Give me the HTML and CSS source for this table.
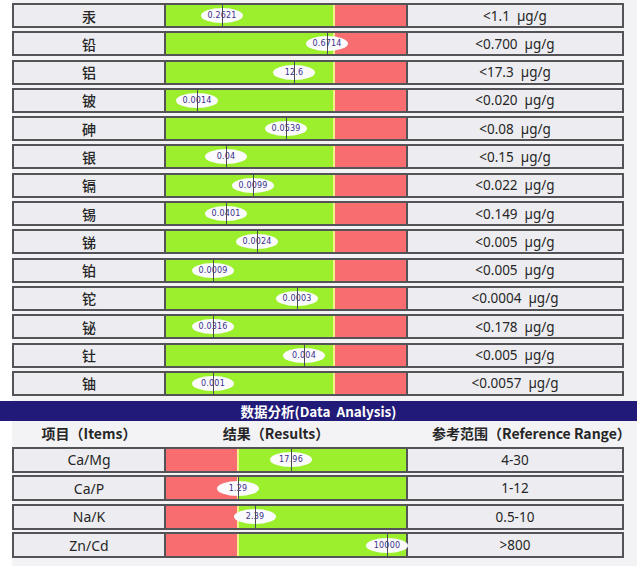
FILE: index.html
```html
<!DOCTYPE html>
<html lang="zh">
<head>
<meta charset="utf-8">
<link rel="stylesheet" href="styles.css">
</head>
<body>
<div class="page">
  <div class="rows rows-top">
    <div class="row"><div class="label">汞</div><div class="bar bar-gr"><div class="seg green"></div><div class="seg line"></div><div class="seg red"></div><div class="marker" style="left:56px"><span>0.2621</span></div></div><div class="value">&lt;1.1&nbsp;&nbsp;µg/g</div></div>
    <div class="row"><div class="label">铅</div><div class="bar bar-gr"><div class="seg green"></div><div class="seg line"></div><div class="seg red"></div><div class="marker" style="left:161px"><span>0.6714</span></div></div><div class="value">&lt;0.700&nbsp;&nbsp;µg/g</div></div>
    <div class="row"><div class="label">铝</div><div class="bar bar-gr"><div class="seg green"></div><div class="seg line"></div><div class="seg red"></div><div class="marker" style="left:128px"><span>12.6</span></div></div><div class="value">&lt;17.3&nbsp;&nbsp;µg/g</div></div>
    <div class="row"><div class="label">铍</div><div class="bar bar-gr"><div class="seg green"></div><div class="seg line"></div><div class="seg red"></div><div class="marker" style="left:31px"><span>0.0014</span></div></div><div class="value">&lt;0.020&nbsp;&nbsp;µg/g</div></div>
    <div class="row"><div class="label">砷</div><div class="bar bar-gr"><div class="seg green"></div><div class="seg line"></div><div class="seg red"></div><div class="marker" style="left:120px"><span>0.0539</span></div></div><div class="value">&lt;0.08&nbsp;&nbsp;µg/g</div></div>
    <div class="row"><div class="label">银</div><div class="bar bar-gr"><div class="seg green"></div><div class="seg line"></div><div class="seg red"></div><div class="marker" style="left:60px"><span>0.04</span></div></div><div class="value">&lt;0.15&nbsp;&nbsp;µg/g</div></div>
    <div class="row"><div class="label">镉</div><div class="bar bar-gr"><div class="seg green"></div><div class="seg line"></div><div class="seg red"></div><div class="marker" style="left:87px"><span>0.0099</span></div></div><div class="value">&lt;0.022&nbsp;&nbsp;µg/g</div></div>
    <div class="row"><div class="label">锡</div><div class="bar bar-gr"><div class="seg green"></div><div class="seg line"></div><div class="seg red"></div><div class="marker" style="left:60px"><span>0.0401</span></div></div><div class="value">&lt;0.149&nbsp;&nbsp;µg/g</div></div>
    <div class="row"><div class="label">锑</div><div class="bar bar-gr"><div class="seg green"></div><div class="seg line"></div><div class="seg red"></div><div class="marker" style="left:91px"><span>0.0024</span></div></div><div class="value">&lt;0.005&nbsp;&nbsp;µg/g</div></div>
    <div class="row"><div class="label">铂</div><div class="bar bar-gr"><div class="seg green"></div><div class="seg line"></div><div class="seg red"></div><div class="marker" style="left:47px"><span>0.0009</span></div></div><div class="value">&lt;0.005&nbsp;&nbsp;µg/g</div></div>
    <div class="row"><div class="label">铊</div><div class="bar bar-gr"><div class="seg green"></div><div class="seg line"></div><div class="seg red"></div><div class="marker" style="left:131px"><span>0.0003</span></div></div><div class="value">&lt;0.0004&nbsp;&nbsp;µg/g</div></div>
    <div class="row"><div class="label">铋</div><div class="bar bar-gr"><div class="seg green"></div><div class="seg line"></div><div class="seg red"></div><div class="marker" style="left:47px"><span>0.0316</span></div></div><div class="value">&lt;0.178&nbsp;&nbsp;µg/g</div></div>
    <div class="row"><div class="label">钍</div><div class="bar bar-gr"><div class="seg green"></div><div class="seg line"></div><div class="seg red"></div><div class="marker" style="left:138px"><span>0.004</span></div></div><div class="value">&lt;0.005&nbsp;&nbsp;µg/g</div></div>
    <div class="row"><div class="label">铀</div><div class="bar bar-gr"><div class="seg green"></div><div class="seg line"></div><div class="seg red"></div><div class="marker" style="left:47px"><span>0.001</span></div></div><div class="value">&lt;0.0057&nbsp;&nbsp;µg/g</div></div>
  </div>

  <div class="band">数据分析(Data&nbsp;&nbsp;Analysis)</div>

  <div class="head">
    <div class="h1">项目（Items）</div>
    <div class="h2">结果（Results）</div>
    <div class="h3">参考范围（Reference Range）</div>
  </div>

  <div class="rows rows-bottom">
    <div class="row row-b"><div class="label lat">Ca/Mg</div><div class="bar bar-rg"><div class="seg red"></div><div class="seg line"></div><div class="seg green"></div><div class="marker" style="left:125px"><span>17.96</span></div></div><div class="value">4-30</div></div>
    <div class="row row-b"><div class="label lat">Ca/P</div><div class="bar bar-rg"><div class="seg red"></div><div class="seg line"></div><div class="seg green"></div><div class="marker" style="left:72px"><span>1.29</span></div></div><div class="value">1-12</div></div>
    <div class="row row-b"><div class="label lat">Na/K</div><div class="bar bar-rg"><div class="seg red"></div><div class="seg line"></div><div class="seg green"></div><div class="marker" style="left:89px"><span>2.39</span></div></div><div class="value">0.5-10</div></div>
    <div class="row row-b"><div class="label lat">Zn/Cd</div><div class="bar bar-rg"><div class="seg red"></div><div class="seg line"></div><div class="seg green"></div><div class="marker" style="left:221px"><span>10000</span></div></div><div class="value">&gt;800</div></div>
  </div>
</div>
</body>
</html>
```

FILE: styles.css
```css
html, body {
  margin: 0;
  padding: 0;
  background: #ffffff;
}

.page {
  width: 640px;
  height: 566px;
  overflow: hidden;
  font-family: "Noto Sans", "Noto Sans CJK SC", sans-serif;
  color: #222;
  background: linear-gradient(to right, #ffffff 0, #ffffff 12px, #f3f3f6 12px, #f3f3f6 637px, #ffffff 637px);
}

.rows {
  display: flex;
  flex-direction: column;
  padding-left: 12px;
  width: 612px;
}

.rows-top {
  padding-top: 3px;
  gap: 3.3px;
}

.rows-bottom {
  padding-top: 2px;
  gap: 2.4px;
}

.row {
  display: grid;
  grid-template-columns: 152px 240px 1fr;
  height: 25px;
  box-sizing: border-box;
  border: 2px solid #545458;
  background: #ededf1;
}

.row-b {
  height: 26px;
}

.label {
  display: flex;
  align-items: center;
  justify-content: center;
  border-right: 2px solid #545458;
  font-family: "Noto Sans CJK SC", sans-serif;
  font-size: 14px;
  font-weight: 500;
  color: #262626;
}

.label.lat {
  font-family: "Noto Sans", sans-serif;
  font-size: 14px;
  font-weight: 400;
}

.value {
  display: flex;
  align-items: center;
  justify-content: center;
  border-left: 2px solid #545458;
  font-size: 13.5px;
  color: #262626;
}

.bar {
  position: relative;
  display: flex;
}

.seg.green {
  background: #9bef2c;
}

.seg.red {
  background: #f86e70;
}

.seg.line {
  width: 2px;
  background: #f1f08a;
}

.bar-gr .green {
  width: 167px;
}

.bar-gr .red {
  flex: 1;
}

.bar-rg .red {
  width: 71px;
}

.bar-rg .green {
  flex: 1;
}

.marker {
  position: absolute;
  top: 50%;
  width: 42px;
  height: 15px;
  margin-left: -21px;
  margin-top: -7.5px;
  border-radius: 50%;
  background: #fbfbfd;
  display: flex;
  align-items: center;
  justify-content: center;
  font-family: "DejaVu Sans", sans-serif;
  font-size: 8px;
  color: #3a2f8a;
  letter-spacing: 0.2px;
}

.marker::after {
  content: "";
  position: absolute;
  left: 50%;
  top: -4px;
  width: 1px;
  height: 23px;
  background: #4a4a52;
}

.marker span {
  position: relative;
}

.band {
  margin-top: 5px;
  width: 637px;
  height: 20px;
  background: #211a78;
  color: #ffffff;
  font-family: "Noto Sans CJK SC", sans-serif;
  font-weight: 700;
  font-size: 13.5px;
  display: flex;
  align-items: center;
  justify-content: center;
}

.head {
  display: grid;
  grid-template-columns: 154px 240px 218px;
  margin-left: 12px;
  height: 24px;
  align-items: center;
  font-family: "Noto Sans CJK SC", sans-serif;
  font-weight: 700;
  font-size: 14px;
  color: #262626;
  text-align: center;
}

.h2 {
  padding-right: 20px;
}

.h3 {
  padding-left: 26px;
  white-space: nowrap;
}
```
